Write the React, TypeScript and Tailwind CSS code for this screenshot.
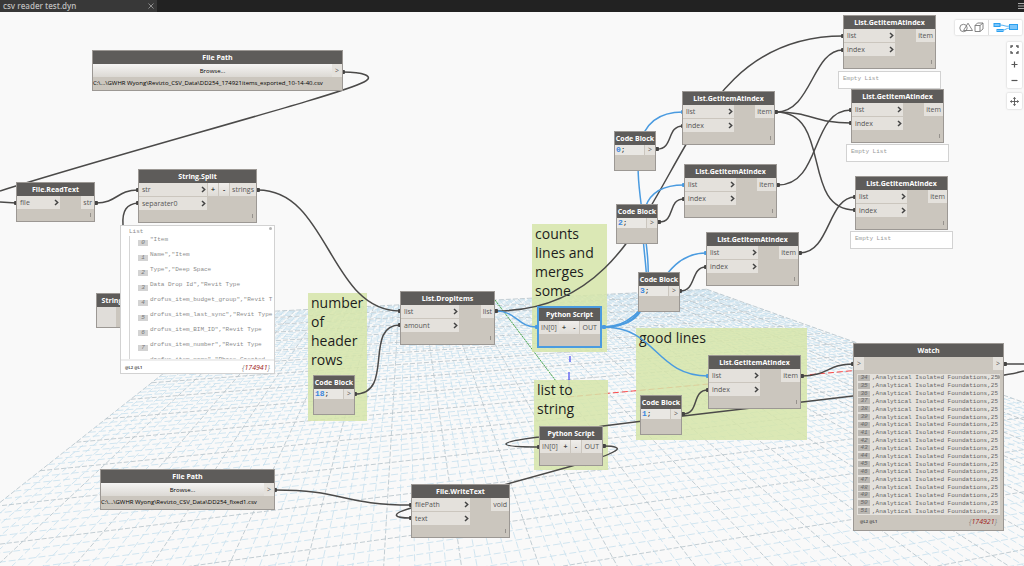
import type { ReactNode } from 'react';

type Point = { x: number; y: number };

const MINOR_PER_HALF = 50;
const NEAR_EDGE = -0.9;

// projects a point of the ground plane (-1..1 on both axes) onto the screen
function project(u: number, v: number): Point {
  const a = 0.168 * u;
  const b = 0.822 * v;
  const w = 1 + a + b;
  return { x: (568 + 3003 * a + 406 * b) / w, y: (397 + 173 * a + 182 * b) / w };
}

function GroundGrid() {
  const lines: { from: Point; to: Point; major: boolean }[] = [];
  for (let i = -MINOR_PER_HALF; i <= MINOR_PER_HALF; i++) {
    const t = i / MINOR_PER_HALF;
    const major = i % 5 === 0;
    lines.push({ from: project(t, 1), to: project(t, NEAR_EDGE), major });
    if (t >= NEAR_EDGE) {
      lines.push({ from: project(-1, t), to: project(1, t), major });
    }
  }
  return (
    <g>
      {lines.map((l, i) => (
        <line
          key={i}
          x1={l.from.x}
          y1={l.from.y}
          x2={l.to.x}
          y2={l.to.y}
          stroke={l.major ? '#b4c2c9' : '#c6e0ed'}
          strokeWidth={0.8}
          strokeDasharray={l.major ? '5 2' : '7 3'}
        />
      ))}
      <path d="M495 300L568 397" stroke="#4cae4c" strokeWidth="1" strokeDasharray="2 1" />
      <path d="M568 397L860 370" stroke="#ff4d4d" strokeWidth="1" strokeDasharray="6 3" />
      <path d="M570 356V362M569 372V392" stroke="#4a4af0" strokeWidth="1.2" />
    </g>
  );
}

const groups = [
  { x: 308, y: 293, w: 59, h: 128, text: 'number of header rows' },
  { x: 532, y: 224, w: 75, h: 128, text: 'counts lines and merges some' },
  { x: 534, y: 380, w: 74, h: 90, text: 'list to string' },
  { x: 636, y: 328, w: 171, h: 112, text: 'good lines' },
];

const wires = [
  'M343 72C362 72 376 76 364 82C340 95 130 150 0 191',
  'M0 202L16 203',
  'M96 203C117 203 117 190 138 190',
  'M123 225C122 210 127 204 138 203',
  'M258 190C329 190 329 311 400 311',
  'M355 394C395 394 363 325 400 325',
  'M496 311C690 311 649 36 843 36',
  'M776 112C812 112 812 50 843 50',
  'M776 112C813 112 813 123 851 123',
  'M776 112C833 112 800 210 855 210',
  'M778 185C822 185 810 110 851 110',
  'M800 253C830 253 828 197 855 197',
  'M657 149C674 149 666 126 683 126',
  'M659 222C676 222 667 199 684 199',
  'M680 291C697 291 690 267 706 267',
  'M683 414C700 414 691 390 708 390',
  'M802 376C828 376 828 364 853 364',
  'M1005 364H1024M1024 371C1010 375 980 380 853 396L683 416L603 426L539 437C515 440 506 442 506 444C506 446 520 447 539 447',
  'M604 446C615 446 621 448 615 451C608 456 590 461 572 466L500 486L411 508C390 514 393 518 411 518',
  'M275 490C343 490 343 505 411 505',
];

const activeWires = [
  'M496 311C517 311 517 327 537 327',
  'M604 327C712 327 574 112 683 112',
  'M604 327C700 327 590 185 684 185',
  'M604 327C655 327 655 253 706 253',
  'M604 327C656 327 656 376 708 376',
];

const plugs = [
  [343, 72], [16, 203], [96, 203], [138, 190], [138, 203], [258, 190], [400, 311], [400, 325],
  [496, 311], [355, 394], [657, 149], [659, 222], [680, 291], [683, 414], [683, 126], [684, 199],
  [706, 267], [708, 390], [776, 112], [778, 185], [800, 253], [802, 376], [843, 36], [843, 50],
  [851, 110], [851, 123], [855, 197], [855, 210], [853, 364], [1005, 364], [539, 447], [604, 446],
  [411, 505], [411, 518], [275, 490],
];

const activePlugs = [[537, 327], [604, 327], [683, 112], [684, 185], [706, 253], [708, 376]];

function Wires() {
  return (
    <g fill="none" strokeWidth="1.5">
      {wires.map((d) => <path key={d} d={d} stroke="#4b4a49" />)}
      {activeWires.map((d) => <path key={d} d={d} stroke="#4a9be0" />)}
      {plugs.map(([x, y]) => (
        <rect key={`${x}-${y}`} x={x - 2} y={y - 2} width="4" height="4" rx="1" fill="#454443" stroke="none" />
      ))}
      {activePlugs.map(([x, y]) => (
        <rect key={`${x}-${y}`} x={x - 2} y={y - 2} width="4" height="4" rx="1" fill="#4a9be0" stroke="none" />
      ))}
    </g>
  );
}

function Chevron() {
  return (
    <svg className="w-[5px] h-[7px] shrink-0" viewBox="0 0 5 7" fill="none" stroke="#444" strokeWidth="1.5">
      <path d="M1 1L3.7 3.5L1 6" />
    </svg>
  );
}

type FrameProps = Point & { w: number; title: string; active?: boolean; children: ReactNode };

function NodeFrame({ x, y, w, title, active, children }: FrameProps) {
  return (
    <section
      style={{ left: x, top: y, width: w }}
      className={`absolute border bg-[#cbc6be] ${active ? 'border-[#4a9be0] ring-1 ring-[#4a9be0]' : 'border-[#9c9894]'}`}
    >
      <h2 className="h-[13px] bg-[#5e5c5a] text-center text-[7px] leading-[13px] font-bold text-white whitespace-nowrap">
        {title}
      </h2>
      {children}
    </section>
  );
}

type NodeProps = Point & {
  w: number;
  title: string;
  inputs: string[];
  output: string;
  variadic?: boolean;
};

function FunctionNode({ x, y, w, title, inputs, output, variadic }: NodeProps) {
  return (
    <NodeFrame x={x} y={y} w={w} title={title}>
      <div className="flex items-start justify-between">
        <div className={`flex flex-col gap-px ${variadic ? 'w-[68px]' : w < 80 ? 'w-[43px]' : w < 94 ? 'w-[51px]' : 'w-[58px]'}`}>
          {inputs.map((name) => (
            <div key={name} className="flex h-[13px] items-center justify-between bg-[#e4e1dc] pl-[3px] pr-px">
              <span>{name}</span>
              <Chevron />
            </div>
          ))}
        </div>
        {variadic && (
          <div className="flex gap-px">
            <StepButton label="+" />
            <StepButton label="-" />
          </div>
        )}
        <div className="h-[13px] bg-[#e4e1dc] px-[2px]">{output}</div>
      </div>
      <div className="flex h-[12px] items-center justify-end pr-[3px]">
        <i className="h-1 w-px bg-[#96928d]" />
      </div>
    </NodeFrame>
  );
}

function StepButton({ label }: { label: string }) {
  return (
    <button className="h-[13px] w-[10px] bg-linear-to-b from-[#f0eeeb] to-[#dedbd6] text-[7px] leading-[12px] font-bold text-[#444]">
      {label}
    </button>
  );
}

function PythonNode({ x, y, w, active }: Point & { w: number; active?: boolean }) {
  return (
    <NodeFrame x={x} y={y} w={w} title="Python Script" active={active}>
      <div className="flex h-[13px] justify-between">
        <div className="bg-[#e4e1dc] px-[2px]">IN[0]</div>
        <StepButton label="+" />
        <StepButton label="-" />
        <div className="bg-[#e4e1dc] px-[3px]">OUT</div>
      </div>
      <div className="h-[12px]" />
    </NodeFrame>
  );
}

function CodeBlock({ x, y, value }: Point & { value: string }) {
  return (
    <NodeFrame x={x} y={y} w={42} title="Code Block">
      <div className="flex h-[10px] gap-px leading-[10px]">
        <code className="flex-1 bg-[#e9e7e3] pl-px font-['Liberation_Mono',monospace] text-[8px] text-[#333]">
          <span className="font-bold text-[#3b86dd]">{value}</span>;
        </code>
        <div className="w-[10px] bg-[#e4e1dc] text-center">&gt;</div>
      </div>
      <div className="h-[15px]" />
    </NodeFrame>
  );
}

function FilePathNode({ x, y, w, path }: Point & { w: number; path: string }) {
  return (
    <NodeFrame x={x} y={y} w={w} title="File Path">
      <div className="flex h-[13px]">
        <button className="flex-1 bg-linear-to-b from-[#f5f4f3] to-[#dcd9d4] text-[6px] leading-[12px] font-medium text-black">
          Browse...
        </button>
        <div className="w-[10px] bg-[#e4e1dc] text-center">&gt;</div>
      </div>
      <p className="h-[13px] text-[6px] leading-[13px] font-medium whitespace-nowrap text-black">{path}</p>
    </NodeFrame>
  );
}

function EmptyPreview({ x, y }: Point) {
  return (
    <div
      style={{ left: x, top: y }}
      className="absolute h-[18px] w-[103px] border border-[#d2d2d2] bg-white pl-1 font-['Liberation_Mono',monospace] text-[6px] leading-[14px] text-[#999]"
    >
      Empty List
    </div>
  );
}

const previewItems = [
  '"Item',
  'Name","Item',
  'Type","Deep Space',
  'Data Drop Id","Revit Type',
  'drofus_item_budget_group","Revit T',
  'drofus_item_last_sync","Revit Type',
  'drofus_item_BIM_ID","Revit Type',
  'drofus_item_number","Revit Type',
  'drofus_item_name","Phase Created',
];

function ListFooter({ levels, count }: { levels: string; count: string }) {
  return (
    <footer className="flex items-center justify-between px-1">
      <span className="text-[4px] font-bold text-[#555]">{levels}</span>
      <span className="text-[7px] text-[#888] italic">
        {'{'}
        <span className="text-[#a01c1c]">{count}</span>
        {'}'}
      </span>
    </footer>
  );
}

function SplitPreview() {
  return (
    <div className="absolute top-[225px] left-[120px] flex h-[149px] w-[155px] flex-col border border-[#d2d2d2] bg-white font-['Liberation_Mono',monospace] text-[6px] text-[#8c8c8c]">
      <i className="absolute top-px right-[2px] h-[3px] w-[3px] rounded-full bg-[#b5b5b5]" />
      <div className="h-[10px] pl-2 leading-[12px]">List</div>
      <ul className="ml-2 flex-1 overflow-hidden border-l border-[#d5d5d5] pl-2">
        {previewItems.map((item, i) => (
          <li key={item} className="flex h-[15px] gap-[2px] leading-[8px]">
            <span className="mt-[4px] h-[6px] w-[10px] shrink-0 bg-[#d3d3d3] text-center leading-[6px] text-[#777] italic">{i}</span>
            <span className="whitespace-nowrap">{item}</span>
          </li>
        ))}
      </ul>
      <div className="h-[14px] border-t-2 border-[#eee] font-['Open_Sans',sans-serif]">
        <ListFooter levels="@L2 @L1" count="174941" />
      </div>
    </div>
  );
}

function WatchNode() {
  const rows = Array.from({ length: 18 }, (_, i) => 34 + i);
  return (
    <NodeFrame x={853} y={343} w={151} title="Watch">
      <div className="flex h-[13px] justify-between">
        <div className="w-[10px] bg-[#e4e1dc] text-center">&gt;</div>
        <div className="w-[10px] bg-[#e4e1dc] text-center">&gt;</div>
      </div>
      <div className="relative mx-[3px] mt-1 bg-[#e4e1dc] font-['Liberation_Mono',monospace] text-[6px] text-[#666]">
        <i className="absolute top-px right-0 h-[4px] w-[3px] rounded-full bg-[#a5a29e]" />
        <ol className="grid h-[141px] grid-rows-[repeat(18,1fr)]">
          {rows.map((n) => (
            <li key={n} className="flex items-center gap-[2px] leading-[7px]">
              <span className="ml-px h-[6px] w-[12px] shrink-0 bg-[#bab7b2] text-center leading-[6px] italic">{n}</span>
              <span className="whitespace-nowrap">,Analytical Isolated Foundations,25</span>
            </li>
          ))}
        </ol>
      </div>
      <div className="h-[15px] px-[2px]">
        <ListFooter levels="@L2 @L1" count="174921" />
      </div>
    </NodeFrame>
  );
}

function ViewControls() {
  const box = 'flex rounded-[1px] bg-white shadow-[0_0_2px_rgba(0,0,0,0.25)]';
  return (
    <div className="absolute top-2 right-[2px] flex flex-col items-end">
      <div className={`${box} h-[15px] w-[67px]`}>
        <button aria-label="3D preview" className="flex flex-1 items-center justify-center border-r border-[#ddd]">
          <svg className="h-[11px] w-[25px]" viewBox="0 0 25 11" fill="none" stroke="#777" strokeWidth="0.9">
            <circle cx="4.5" cy="6" r="3.7" />
            <path d="M4.5 8.5L9 1.2L13.5 8.5Z" />
            <path d="M16 3.5H21V9.5H16ZM16 3.5L18.5 1H24V7L21 9.5M21 3.5L24 1" />
          </svg>
        </button>
        <button aria-label="Graph view" className="flex flex-1 items-center justify-center">
          <svg className="h-[11px] w-[25px]" viewBox="0 0 25 11" fill="#7cc6fa" stroke="#2ba0f0" strokeWidth="1">
            <path d="M7 3C12 3 12 5 17 4M10 8C13 8 13 6 17 6" fill="none" strokeWidth="0.8" />
            <rect x="1" y="1.5" width="6" height="3" />
            <rect x="4" y="7.5" width="6" height="2" />
            <rect x="16.5" y="2.5" width="8" height="5" />
          </svg>
        </button>
      </div>
      <div className={`${box} mt-[7px] h-[46px] w-[15px] flex-col items-center justify-around`}>
        <button aria-label="Fit">
          <svg className="size-[9px]" viewBox="0 0 9 9" fill="none" stroke="#555" strokeWidth="1.3">
            <path d="M1 3V1H3M6 1H8V3M8 6V8H6M3 8H1V6" />
          </svg>
        </button>
        <button aria-label="Zoom in">
          <svg className="size-[9px]" viewBox="0 0 9 9" stroke="#555" strokeWidth="1.2">
            <path d="M4.5 1.5V7.5M1.5 4.5H7.5" />
          </svg>
        </button>
        <button aria-label="Zoom out">
          <svg className="size-[9px]" viewBox="0 0 9 9" stroke="#555" strokeWidth="1.2">
            <path d="M1.5 4.5H7.5" />
          </svg>
        </button>
      </div>
      <div className={`${box} mt-[5px] h-[16px] w-[15px] items-center justify-center`}>
        <button aria-label="Pan">
          <svg className="size-[9px]" viewBox="0 0 9 9" fill="none" stroke="#555" strokeWidth="0.9">
            <path d="M4.5 0.5V8.5M0.5 4.5H8.5M3.2 1.7L4.5 0.5L5.8 1.7M3.2 7.3L4.5 8.5L5.8 7.3M1.7 3.2L0.5 4.5L1.7 5.8M7.3 3.2L8.5 4.5L7.3 5.8" />
          </svg>
        </button>
      </div>
    </div>
  );
}

const itemNodes = [
  { x: 682, y: 91 },
  { x: 684, y: 164 },
  { x: 706, y: 232 },
  { x: 708, y: 355 },
  { x: 843, y: 15 },
  { x: 851, y: 89 },
  { x: 855, y: 176 },
];

const codeBlocks = [
  { x: 313, y: 375, value: '18' },
  { x: 614, y: 131, value: '0' },
  { x: 616, y: 204, value: '2' },
  { x: 638, y: 272, value: '3' },
  { x: 640, y: 395, value: '1' },
];

export default function App() {
  return (
    <div className="flex h-screen flex-col overflow-hidden bg-[#f9f9f9] font-['Open_Sans',sans-serif] text-[7px] leading-[13px] text-[#555]">
      <header className="z-10 flex h-3 shrink-0 items-center justify-between bg-[#222]">
        <div className="flex h-3 w-[157px] items-center justify-between bg-[#383838] px-[3px]">
          <span className="text-[8px] leading-3 font-semibold text-[#bdbdbd]">csv reader test.dyn</span>
          <button aria-label="Close tab">
            <svg className="size-[6px]" viewBox="0 0 6 6" stroke="#999" strokeWidth="0.9">
              <path d="M0.5 0.5L5.5 5.5M5.5 0.5L0.5 5.5" />
            </svg>
          </button>
        </div>
        <button aria-label="Menu">
          <svg className="h-[8px] w-[7px]" viewBox="0 0 7 8" stroke="#aaa" strokeWidth="1">
            <path d="M1 1.5H7M1 4H7M1 6.5H7" />
          </svg>
        </button>
      </header>

      <main className="relative flex-1">
        <div className="absolute inset-x-0 -top-3 bottom-0">
          <svg className="absolute inset-0 h-full w-full" fill="none">
            <GroundGrid />
          </svg>
          {groups.map((g) => (
            <div
              key={g.text}
              style={{ left: g.x, top: g.y, width: g.w, height: g.h }}
              className="absolute bg-[#d6e5a9]/85 pl-[3px] text-[14px] leading-[19px] text-[#1d1d1d]"
            >
              {g.text}
            </div>
          ))}
          <svg className="absolute inset-0 h-full w-full">
            <Wires />
          </svg>

          <FilePathNode x={92} y={50} w={251} path="C:\...\GWHR Wyong\Revizto_CSV_Data\DD254_174921items_exported_10-14-40.csv" />
          <FilePathNode x={100} y={469} w={175} path="C:\...\GWHR Wyong\Revizto_CSV_Data\DD254_fixed1.csv" />
          <FunctionNode x={16} y={182} w={79} title="File.ReadText" inputs={['file']} output="str" />
          <FunctionNode x={138} y={169} w={119} title="String.Split" inputs={['str', 'separater0']} output="strings" variadic />
          <FunctionNode x={400} y={291} w={95} title="List.DropItems" inputs={['list', 'amount']} output="list" />
          <FunctionNode x={411} y={484} w={99} title="File.WriteText" inputs={['filePath', 'text']} output="void" />
          <NodeFrame x={96} y={293} w={32} title="String">
            <div className="h-[20px] w-[19px] bg-[#e0ddd9]" />
          </NodeFrame>
          <EmptyPreview x={838} y={71} />
          {itemNodes.map((n) => (
            <FunctionNode key={`${n.x}-${n.y}`} {...n} w={93} title="List.GetItemAtIndex" inputs={['list', 'index']} output="item" />
          ))}
          {codeBlocks.map((c) => <CodeBlock key={c.value} {...c} />)}
          <PythonNode x={538} y={307} w={63} active />
          <PythonNode x={539} y={426} w={64} />
          <WatchNode />
          <SplitPreview />
          <EmptyPreview x={846} y={144} />
          <EmptyPreview x={850} y={231} />
        </div>
        <ViewControls />
      </main>
    </div>
  );
}
